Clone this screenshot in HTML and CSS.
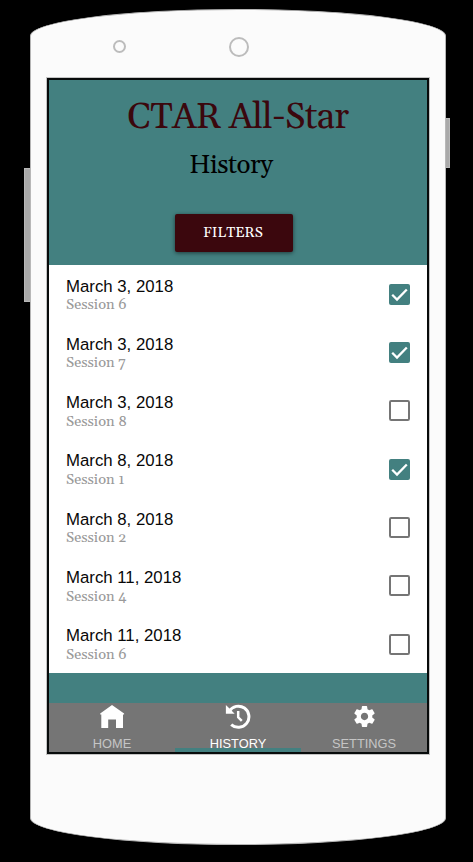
FILE: index.html
```html
<!DOCTYPE html>
<html lang="en">
<head>
<meta charset="utf-8">
<title>CTAR All-Star</title>
<link rel="stylesheet" href="styles.css">
</head>
<body>
<div class="phone">
  <span class="side-key volume"></span>
  <span class="side-key power"></span>
  <span class="lens small"></span>
  <span class="lens large"></span>
  <main class="screen">
    <header class="header">
      <h1 class="brand">CTAR All-Star</h1>
      <h2 class="title">History</h2>
      <button class="filters">FILTERS</button>
    </header>
    <ul class="sessions">
      <li class="row"><div><p class="date">March 3, 2018</p><p class="session">Session 6</p></div><svg class="check" viewBox="0 0 21 21"><rect class="on" width="21" height="21" rx="2"/><path class="tick" d="M3.2 10.8 8 15.5 17.8 5.5"/></svg></li>
      <li class="row"><div><p class="date">March 3, 2018</p><p class="session">Session 7</p></div><svg class="check" viewBox="0 0 21 21"><rect class="on" width="21" height="21" rx="2"/><path class="tick" d="M3.2 10.8 8 15.5 17.8 5.5"/></svg></li>
      <li class="row"><div><p class="date">March 3, 2018</p><p class="session">Session 8</p></div><svg class="check" viewBox="0 0 21 21"><rect class="off" x="1" y="1" width="19" height="19" rx="1.2"/></svg></li>
      <li class="row"><div><p class="date">March 8, 2018</p><p class="session">Session 1</p></div><svg class="check" viewBox="0 0 21 21"><rect class="on" width="21" height="21" rx="2"/><path class="tick" d="M3.2 10.8 8 15.5 17.8 5.5"/></svg></li>
      <li class="row"><div><p class="date">March 8, 2018</p><p class="session">Session 2</p></div><svg class="check" viewBox="0 0 21 21"><rect class="off" x="1" y="1" width="19" height="19" rx="1.2"/></svg></li>
      <li class="row"><div><p class="date">March 11, 2018</p><p class="session">Session 4</p></div><svg class="check" viewBox="0 0 21 21"><rect class="off" x="1" y="1" width="19" height="19" rx="1.2"/></svg></li>
      <li class="row"><div><p class="date">March 11, 2018</p><p class="session">Session 6</p></div><svg class="check" viewBox="0 0 21 21"><rect class="off" x="1" y="1" width="19" height="19" rx="1.2"/></svg></li>
    </ul>
    <nav class="tabs">
      <a class="tab"><svg class="icon" viewBox="0 0 26 26"><path d="M13 1 1.200 9.500V10.500H2.300V24H9.200V15.500h7.800V24H24V10.500h1.100V9.500z"/></svg><span>HOME</span></a>
      <a class="tab active"><svg class="icon" viewBox="0 0 26 26"><path class="line" d="M4.300 7.200A10.600 10.600 0 1 1 6.200 20.600"/><path d="M.9 1v8.800h8.800z"/><path class="hand" d="M13.200 7v6.300l3.600 3.600"/></svg><span>HISTORY</span></a>
      <a class="tab"><svg class="icon gear" viewBox="0 0 24 24"><path d="M19.430 12.980c.04-.32.07-.64.07-.98s-.03-.66-.07-.98l2.110-1.650c.19-.15.24-.42.12-.64l-2-3.460c-.12-.22-.39-.3-.61-.22l-2.490 1c-.52-.4-1.080-.73-1.690-.98l-.38-2.650C14.460 2.180 14.250 2 14 2h-4c-.25 0-.46.18-.49.42l-.38 2.650c-.61.25-1.170.59-1.690.98l-2.490-1c-.23-.09-.49 0-.61.22l-2 3.460c-.13.22-.07.49.12.64l2.110 1.650c-.04.32-.07.65-.07.98s.03.66.07.98l-2.110 1.650c-.19.15-.24.42-.12.64l2 3.460c.12.22.39.3.61.22l2.490-1c.52.4 1.080.73 1.690.98l.38 2.650c.03.24.24.42.49.42h4c.25 0 .46-.18.49-.42l.38-2.650c.61-.25 1.170-.59 1.690-.98l2.490 1c.23.09.49 0 .61-.22l2-3.460c.12-.22.07-.49-.12-.64l-2.110-1.650zM12 15.500c-1.930 0-3.500-1.570-3.500-3.500s1.570-3.500 3.500-3.500 3.500 1.570 3.500 3.500-1.570 3.500-3.500 3.500z"/></svg><span>SETTINGS</span></a>
    </nav>
  </main>
</div>
</body>
</html>
```
FILE: styles.css
```css
* { box-sizing: border-box; margin: 0; padding: 0; }
body { background: #000; height: 862px; overflow: hidden; padding: 9px 0 0 30px; font-family: "Liberation Sans", sans-serif; }
.phone { position: relative; width: 416px; height: 836px; padding: 68px 0 0 16px; background: #fbfbfb; border: 1px solid #b5b5b5; border-radius: 208px / 27px; }
.side-key { position: absolute; width: 5px; background: #a9a9a9; border: 1px solid #b8b8b8; }
.volume { left: -7px; top: 158px; width: 7px; height: 134px; }
.power { left: 414px; top: 108px; height: 50px; }
.lens { position: absolute; border: 2px solid #bcbcbc; border-radius: 50%; }
.small { left: 82px; top: 30px; width: 13px; height: 13px; }
.large { left: 198px; top: 27px; width: 20px; height: 20px; }
.screen { width: 382px; height: 676px; display: flex; flex-direction: column; background: #438080; border: 2px solid #080b0b; outline: 1px solid #c4c4c4; outline-offset: -0.5px; }
.header { height: 185.400px; display: flex; flex-direction: column; align-items: center; font-family: Georgia, Gelasio, "Liberation Serif", serif; }
.brand, .title { font-weight: 400; }
.brand { margin-top: 14px; height: 46px; line-height: 46px; font-size: 36.500px; letter-spacing: -.72px; color: #3b070d; }
.title { margin-top: 7px; height: 38px; line-height: 38px; font-size: 26px; letter-spacing: -.45px; margin-right: 14px; color: #000; }
.filters { margin-top: 29px; margin-right: 9px; width: 118px; height: 38px; border: 0; border-radius: 2px; background: #3b070d; color: #fff; font: 14.5px/38px Georgia, Gelasio, "Liberation Serif", serif; padding-right: 1px; box-shadow: 0 1px 4px rgba(0,0,0,.55); }
.sessions { list-style: none; height: 408px; background: #fff; display: grid; grid-template-rows: repeat(7, 58.300px); }
.row { display: flex; justify-content: space-between; align-items: flex-start; padding: 11.200px 17px 0; }
.date { font-size: 16.800px; line-height: 20px; color: #080808; }
.session { font: 14.600px/17px Georgia, Gelasio, "Liberation Serif", serif; margin-top: -.4px; color: #999; }
.check { width: 21px; height: 21px; margin-top: 7.200px; }
.on { fill: #438080; }
.off { fill: none; stroke: #757575; stroke-width: 2; }
.tick { fill: none; stroke: #fff; stroke-width: 2.300; }
.tabs { margin-top: auto; height: 49px; display: grid; grid-template-columns: repeat(3, 1fr); background: #757575; }
.tab { display: flex; flex-direction: column; align-items: center; color: #c5c5c5; font-size: 12.800px; line-height: 15px; }
.active { color: #fff; box-shadow: inset 0 -4px #438080; }
.icon { width: 26px; height: 26px; margin: 1px 0 6px; fill: #fff; }
.gear { width: 25px; height: 25px; margin: 1px 0 7px; }
.line, .hand { fill: none; stroke: #fff; stroke-width: 3; }
.hand { stroke-width: 2.500; }
```
